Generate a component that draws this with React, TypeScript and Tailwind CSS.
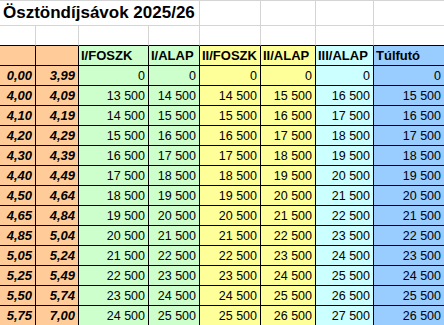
const bands = [
    ['0,00', '3,99'],
    ['4,00', '4,09'],
    ['4,10', '4,19'],
    ['4,20', '4,29'],
    ['4,30', '4,39'],
    ['4,40', '4,49'],
    ['4,50', '4,64'],
    ['4,65', '4,84'],
    ['4,85', '5,04'],
    ['5,05', '5,24'],
    ['5,25', '5,49'],
    ['5,50', '5,74'],
    ['5,75', '7,00'],
]

const offsets = [0, 1000, 1000, 2000, 3000, 2000]

const widths = ['w-[36px]', 'w-[43px]', 'w-[70px]', 'w-[51px]', 'w-[61px]', 'w-[55px]', 'w-[58px]', 'flex-1']
const fills = ['bg-[#ffcc99]', 'bg-[#ffcc99]', 'bg-[#ccffcc]', 'bg-[#ccffcc]', 'bg-[#ffff99]', 'bg-[#ffff99]', 'bg-[#ccffff]', 'bg-[#99ccff]']
const headers = ['', '', 'I/FOSZK', 'I/ALAP', 'II/FOSZK', 'II/ALAP', 'III/ALAP', 'Túlfutó']

const fmt = (n: number) => (n === 0 ? '0' : `${Math.floor(n / 1000)} ${String(n % 1000).padStart(3, '0')}`)

export default function App() {
    return (
        <div className="w-[444px] h-[325px] overflow-hidden bg-white text-black font-['Liberation_Sans',Arial,sans-serif]">
            {/* title row */}
            <div className="flex h-[26px] border-t border-[#d4d4d4]">
                <div className="w-[200px] shrink-0 border-r border-b border-[#d4d4d4] pl-[3px] text-[17px] font-bold leading-[24px] whitespace-nowrap">
                    Ösztöndíjsávok 2025/26
                </div>
                {widths.slice(4).map((w, i) => (
                    <div key={i} className={`${w} shrink-0 border-b border-[#d4d4d4] ${i < 3 ? 'border-r' : ''}`} />
                ))}
            </div>

            {/* blank row */}
            <div className="flex h-[20px]">
                {widths.map((w, i) => (
                    <div key={i} className={`${w} shrink-0 border-b border-b-black ${i < 7 ? 'border-r border-r-[#d4d4d4]' : ''}`} />
                ))}
            </div>

            {/* header row */}
            <div className="flex h-[20px]">
                {headers.map((h, i) => (
                    <div
                        key={i}
                        className={`${widths[i]} ${fills[i]} shrink-0 border-b border-black ${i < 7 ? 'border-r' : ''} pl-[2px] text-[13px] font-bold leading-[19px] whitespace-nowrap overflow-hidden`}
                    >
                        {h}
                    </div>
                ))}
            </div>

            {bands.map(([from, to], r) => {
                const base = r === 0 ? 0 : 13500 + (r - 1) * 1000
                const values = offsets.map((o) => (r === 0 ? 0 : base + o))
                return (
                    <div key={r} className="flex h-[20px]">
                        {[from, to].map((t, i) => (
                            <div
                                key={i}
                                className={`${widths[i]} ${fills[i]} shrink-0 border-r border-b border-black pr-[3px] text-right text-[13px] font-bold italic leading-[20px]`}
                            >
                                {t}
                            </div>
                        ))}
                        {values.map((v, i) => (
                            <div
                                key={i}
                                className={`${widths[i + 2]} ${fills[i + 2]} shrink-0 border-b border-black ${i < 5 ? 'border-r' : ''} pr-[3px] text-right text-[12.5px] leading-[20px] whitespace-nowrap`}
                            >
                                {fmt(v)}
                            </div>
                        ))}
                    </div>
                )
            })}
        </div>
    )
}
